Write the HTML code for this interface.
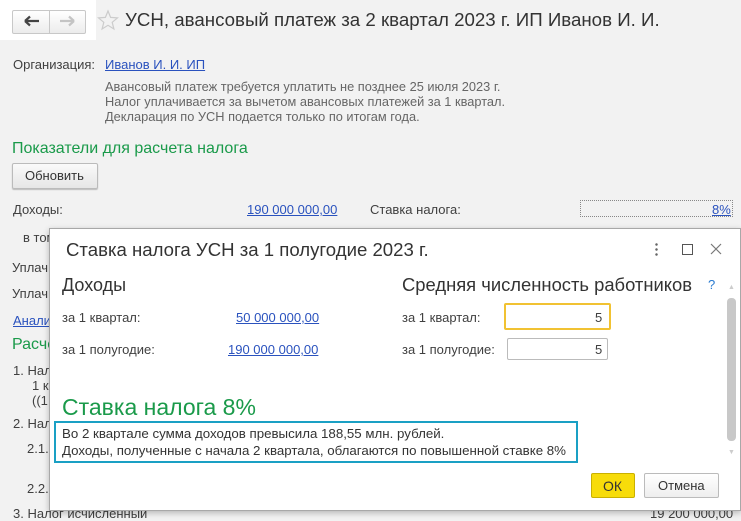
<!DOCTYPE html>
<html><head><meta charset="utf-8"><style>
*{margin:0;padding:0;box-sizing:border-box}
body{width:741px;height:515px;overflow:hidden;background:#f2f2f2;font-family:"Liberation Sans","Noto Sans CJK JP",sans-serif;font-size:13px;color:#404040;position:relative}
.a{position:absolute;white-space:nowrap;line-height:1}
.lnk{color:#2a52be;text-decoration:underline}
.g{color:#1a9a4a}
.gr{color:#666;font-size:12.5px}
</style></head><body>
<div class="a" style="left:0;top:0;width:96px;height:40px;background:#fff"></div>
<div class="a" style="left:12px;top:10px;width:74px;height:24px;border:1px solid #c8c8c8;border-radius:2px;background:linear-gradient(#fff,#ececec)"></div>
<div class="a" style="left:49px;top:11px;width:1px;height:22px;background:#c8c8c8"></div>
<svg class="a" style="left:24px;top:15px" width="16" height="12"><path d="M1 6H15M1 6L6 1.5M1 6L6 10.5" stroke="#444" stroke-width="2.2" fill="none"/></svg>
<svg class="a" style="left:59px;top:15px" width="16" height="12"><path d="M1 6H15M15 6L10 1.5M15 6L10 10.5" stroke="#c4c4c4" stroke-width="2.2" fill="none"/></svg>
<svg class="a" style="left:97px;top:9px" width="22" height="22"><path d="M11 2L13.6 8.4 20.5 8.9 15.2 13.3 16.9 20 11 16.3 5.1 20 6.8 13.3 1.5 8.9 8.4 8.4Z" fill="none" stroke="#ccc" stroke-width="1.2"/></svg>
<div class="a" style="left:125px;top:11px;font-size:18.7px;color:#333">УСН, авансовый платеж за 2 квартал 2023 г. ИП Иванов И. И.</div>
<div class="a" style="left:13px;top:58px">Организация:</div>
<div class="a lnk" style="left:105px;top:58px">Иванов И. И. ИП</div>
<div class="a gr" style="left:105px;top:81px;font-size:12.8px">Авансовый платеж требуется уплатить не позднее 25 июля 2023 г.</div>
<div class="a gr" style="left:105px;top:96px;font-size:12.8px">Налог уплачивается за вычетом авансовых платежей за 1 квартал.</div>
<div class="a gr" style="left:105px;top:111px;font-size:12.8px">Декларация по УСН подается только по итогам года.</div>
<div class="a g" style="left:12px;top:141px;font-size:16px">Показатели для расчета налога</div>
<div class="a" style="left:12px;top:163px;width:86px;height:26px;border:1px solid #bbb;border-radius:2px;background:linear-gradient(#fafafa,#e6e6e6);box-shadow:0 1px 1px #bbb"></div>
<div class="a" style="left:25px;top:169px;color:#333">Обновить</div>
<div class="a" style="left:13px;top:203px">Доходы:</div>
<div class="a lnk" style="left:247px;top:203px">190 000 000,00</div>
<div class="a" style="left:370px;top:203px">Ставка налога:</div>
<div class="a" style="left:580px;top:200px;width:153px;height:17px;border:1px dotted #888"></div>
<div class="a lnk" style="left:712px;top:203px">8%</div>
<div class="a" style="left:23px;top:231px">в том</div>
<div class="a" style="left:12px;top:261px">Уплач</div>
<div class="a" style="left:12px;top:287px">Уплач</div>
<div class="a lnk" style="left:13px;top:314px">Анали</div>
<div class="a g" style="left:12px;top:337px;font-size:16px">Расчет</div>
<div class="a" style="left:13px;top:364px">1. Нал</div>
<div class="a" style="left:32px;top:379px">1 к</div>
<div class="a" style="left:32px;top:394px">((1</div>
<div class="a" style="left:13px;top:417px">2. Нал</div>
<div class="a" style="left:27px;top:442px">2.1.</div>
<div class="a" style="left:27px;top:482px">2.2.</div>
<div class="a" style="left:13px;top:507px">3. Налог исчисленный</div>
<div class="a" style="left:650px;top:507px">19 200 000,00</div>

<div class="a" style="left:49px;top:228px;width:692px;height:283px;background:#fff;border:1px solid #a8a8a8;box-shadow:0 2px 6px rgba(0,0,0,.25)"></div>
<div class="a" style="left:66px;top:241px;font-size:18.6px;color:#333">Ставка налога УСН за 1 полугодие 2023 г.</div>
<div class="a" style="left:655px;top:242px;width:3px;height:14px;background:radial-gradient(circle,#666 1px,transparent 1.5px) 0 0/3px 5px"></div>
<div class="a" style="left:682px;top:244px;width:11px;height:11px;border:1px solid #555"></div>
<svg class="a" style="left:710px;top:243px" width="12" height="12"><path d="M1 1L11 11M11 1L1 11" stroke="#777" stroke-width="1.2"/></svg>
<div class="a" style="left:62px;top:276px;font-size:18px;color:#333">Доходы</div>
<div class="a" style="left:402px;top:276px;font-size:18.4px;color:#333">Средняя численность работников</div>
<div class="a" style="left:708px;top:278px;font-size:13px;color:#2a7bd0">?</div>
<div class="a" style="left:62px;top:311px">за 1 квартал:</div>
<div class="a lnk" style="left:236px;top:311px">50 000 000,00</div>
<div class="a" style="left:62px;top:343px">за 1 полугодие:</div>
<div class="a lnk" style="left:228px;top:343px">190 000 000,00</div>
<div class="a" style="left:402px;top:311px">за 1 квартал:</div>
<div class="a" style="left:504px;top:303px;width:107px;height:27px;border:2px solid #f1c232;border-radius:2px"></div>
<div class="a" style="left:595px;top:311px">5</div>
<div class="a" style="left:402px;top:343px">за 1 полугодие:</div>
<div class="a" style="left:507px;top:338px;width:101px;height:22px;border:1px solid #bbb;border-radius:2px"></div>
<div class="a" style="left:595px;top:343px">5</div>
<div class="a" style="left:727px;top:298px;width:9px;height:143px;background:#c8c8c8;border-radius:4px"></div>
<div class="a" style="left:728px;top:284px;font-size:7px;color:#ccc">▲</div>
<div class="a" style="left:728px;top:449px;font-size:7px;color:#ccc">▼</div>
<div class="a g" style="left:62px;top:396px;font-size:23px">Ставка налога 8%</div>
<div class="a" style="left:54px;top:421px;width:524px;height:42px;border:2px solid #1aa0c4"></div>
<div class="a" style="left:62px;top:427px;font-size:13.3px;color:#333">Во 2 квартале сумма доходов превысила 188,55 млн. рублей.</div>
<div class="a" style="left:62px;top:444px;font-size:13.3px;color:#333">Доходы, полученные с начала 2 квартала, облагаются по повышенной ставке 8%</div>
<div class="a" style="left:591px;top:473px;width:44px;height:25px;background:#f7dc0a;border:1px solid #c9b000;border-radius:2px"></div>
<div class="a" style="left:603px;top:479px;font-size:14px;color:#333">ОК</div>
<div class="a" style="left:644px;top:473px;width:75px;height:25px;background:linear-gradient(#fff,#eee);border:1px solid #bbb;border-radius:2px"></div>
<div class="a" style="left:658px;top:479px;color:#333">Отмена</div>
</body></html>
